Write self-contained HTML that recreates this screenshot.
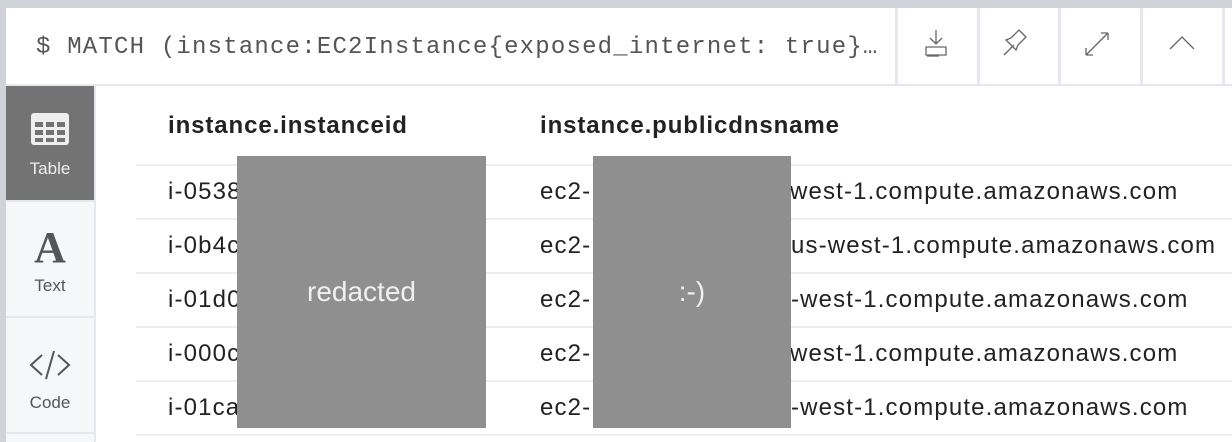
<!DOCTYPE html>
<html><head><style>
body{margin:0;width:1232px;height:442px;background:#d0d4da;position:relative;overflow:hidden;font-family:"Liberation Sans",sans-serif}
.a{position:absolute}
#hdr{left:6px;top:8px;width:1226px;height:76px;background:#fff}
#q{left:36px;top:34px;font-family:"Liberation Mono",monospace;font-size:24px;color:#555;letter-spacing:1.2px;white-space:nowrap}
.div{top:8px;width:3px;height:76px;background:#e6e8ef}
#line{left:6px;top:84px;width:1226px;height:2px;background:#e6e8ef}
#main{left:96px;top:86px;width:1136px;height:356px;background:#fff}
#side{left:6px;top:86px;width:88px;height:356px;background:#f6f7f9}
#sb{left:94px;top:86px;width:2px;height:356px;background:#e6e8ef}
.item{left:6px;width:88px;height:114px;text-align:center;color:#555;font-size:17px}
.sep{left:6px;width:88px;height:2px;background:#e6e8ef}
.th{top:112px;font-size:24px;font-weight:bold;color:#222;letter-spacing:0.9px}
.td{font-size:24px;color:#222;letter-spacing:1.15px;white-space:nowrap}
.rl{left:136px;width:1096px;height:2px;background:#eceef2}
.red{top:156px;height:272px;background:#8f8f8f;color:#f0f0f0;font-size:28px;display:flex;align-items:center;justify-content:center}
</style></head><body>
<div class="a" id="hdr"></div>
<div class="a" id="q">$ MATCH (instance:EC2Instance{exposed_internet: true}…</div>
<div class="a div" style="left:895px"></div>
<div class="a div" style="left:977px"></div>
<div class="a div" style="left:1058px"></div>
<div class="a div" style="left:1140px"></div>
<div class="a div" style="left:1222px"></div>
<svg class="a" style="left:896px;top:8px" width="336" height="76" fill="none" stroke="#666" stroke-width="1.3">
<path d="M40 22v14M34 30l6 6 6-6M30 39v8h20v-8z" />
<path d="M31 48h12"/>
<path d="M108 47l10-10M115 30l8-8 7 7-8 8-2 5-10-10z"/>
<path d="M190 47l22-22M190 47v-7M190 47h7M212 25h-7M212 25v7"/>
<path d="M274 41l12-12 12 12"/>
</svg>
<div class="a" id="line"></div>
<div class="a" id="main"></div>
<div class="a" id="side"></div>
<div class="a" id="sb"></div>
<div class="a item" style="top:86px;background:#737373;color:#eee">
<svg style="margin-top:26px" width="40" height="34"><rect x="1" y="1" width="38" height="32" rx="3" fill="#eee"/><g fill="#737373"><rect x="5" y="10" width="8" height="5"/><rect x="16" y="10" width="8" height="5"/><rect x="27" y="10" width="8" height="5"/><rect x="5" y="18" width="8" height="5"/><rect x="16" y="18" width="8" height="5"/><rect x="27" y="18" width="8" height="5"/><rect x="5" y="26" width="8" height="4"/><rect x="16" y="26" width="8" height="4"/><rect x="27" y="26" width="8" height="4"/></g></svg>
<div style="margin-top:8px">Table</div></div>
<div class="a sep" style="top:200px"></div>
<div class="a item" style="top:202px"><div style="font-family:'Liberation Serif',serif;font-weight:bold;font-size:44px;line-height:44px;margin-top:24px;color:#555">A</div><div style="margin-top:6px">Text</div></div>
<div class="a sep" style="top:316px"></div>
<div class="a item" style="top:318px"><svg style="margin-top:30px" width="44" height="34" fill="none" stroke="#555" stroke-width="2"><path d="M14 7L3 17l11 10M30 7l11 10-11 10M26 3L18 31"/></svg><div style="margin-top:6px">Code</div></div>
<div class="a sep" style="top:432px"></div>
<div class="a th" style="left:168px">instance.instanceid</div>
<div class="a th" style="left:540px">instance.publicdnsname</div>
<div class="a rl" style="top:164px"></div>
<div class="a rl" style="top:218px"></div>
<div class="a rl" style="top:272px"></div>
<div class="a rl" style="top:326px"></div>
<div class="a rl" style="top:380px"></div>
<div class="a rl" style="top:434px"></div>
<div class="a td" style="left:168px;top:178px">i-0538</div>
<div class="a td" style="left:168px;top:232px">i-0b4c</div>
<div class="a td" style="left:168px;top:286px">i-01d0</div>
<div class="a td" style="left:168px;top:340px">i-000c</div>
<div class="a td" style="left:168px;top:394px">i-01ca</div>
<div class="a td" style="left:540px;top:178px">ec2-</div>
<div class="a td" style="left:540px;top:232px">ec2-</div>
<div class="a td" style="left:540px;top:286px">ec2-</div>
<div class="a td" style="left:540px;top:340px">ec2-</div>
<div class="a td" style="left:540px;top:394px">ec2-</div>
<div class="a td" style="left:790px;top:178px">west-1.compute.amazonaws.com</div>
<div class="a td" style="left:791px;top:232px">us-west-1.compute.amazonaws.com</div>
<div class="a td" style="left:791px;top:286px">-west-1.compute.amazonaws.com</div>
<div class="a td" style="left:790px;top:340px">west-1.compute.amazonaws.com</div>
<div class="a td" style="left:791px;top:394px">-west-1.compute.amazonaws.com</div>
<div class="a red" style="left:237px;width:249px">redacted</div>
<div class="a red" style="left:593px;width:198px">:-)</div>
</body></html>
